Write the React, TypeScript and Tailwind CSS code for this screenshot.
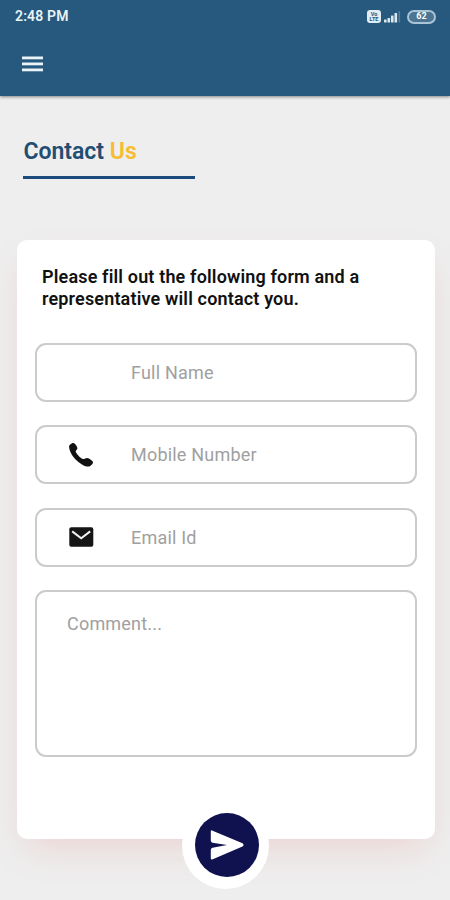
import type { ReactNode } from 'react';

interface FieldProps {
  type: string;
  placeholder: string;
  icon?: ReactNode;
}

function Field({ type, placeholder, icon }: FieldProps) {
  return (
    <label className="flex h-[59px] items-center rounded-[11px] border-2 border-[#cbcbcb] bg-white pl-[30px]">
      <span className="flex w-16 shrink-0 items-center">{icon}</span>
      <input
        type={type}
        placeholder={placeholder}
        className="min-w-0 flex-1 bg-transparent text-[18px] tracking-[0.2px] outline-none placeholder:text-[#a0a0a0]"
      />
    </label>
  );
}

function MenuIcon() {
  return (
    <svg width="21" height="16" viewBox="0 0 21 16" fill="#e9f3f8">
      <rect x="0" y="0.5" width="21" height="2.8" />
      <rect x="0" y="6.5" width="21" height="2.8" />
      <rect x="0" y="12.5" width="21" height="2.8" />
    </svg>
  );
}

function PhoneIcon() {
  return (
    <svg className="ml-[0.5px]" width="26" height="26" viewBox="0 0 26 26" fill="#111">
      <path d="M1.1 4.4 C1.1 2.8 4 .8 5.6 1 C7.3 1.7 9.4 4.8 9.4 6.2 C9.4 7.6 7.6 8.3 7.6 9.4 C8.4 11.8 12.4 16 14.8 17 C16.4 17.2 17.6 15.9 19.2 15.9 C21.2 16.2 24.6 18.6 25 20 C25.2 21.8 22.6 24.3 20.6 24.6 C17.6 24.9 12.8 22.4 9 18.8 C4.6 14.8 .9 8.4 1.1 4.4Z" />
    </svg>
  );
}

function MailIcon() {
  return (
    <svg className="ml-[1.5px]" width="25" height="20" viewBox="0 0 25 20">
      <rect x="0.3" y="0.3" width="24" height="19.4" rx="2" fill="#151515" />
      <path d="M3.2 4.4 L12.2 11.2 L21.2 4.4" fill="none" stroke="#f2f2f2" strokeWidth="2" />
    </svg>
  );
}

function StatusBar() {
  return (
    <div className="flex h-8 items-center justify-between pl-[15px] pr-[14px] pt-px">
      <span className="text-[14px] font-semibold tracking-[0.15px] text-[#e9f3f8]">2:48 PM</span>
      <div className="flex items-center">
        <span className="flex h-[13px] w-[14px] flex-col items-center justify-center rounded-[3px] bg-[#e3ecf2] text-[5.5px] font-bold leading-[5px] text-[#25587c]">
          <span>Vo</span>
          <span>LTE</span>
        </span>
        <svg className="ml-[3px]" width="17" height="13" viewBox="0 0 17 13" fill="#dce7ee">
          <rect x="0" y="9.5" width="2.6" height="3" rx="0.5" />
          <rect x="3.5" y="8" width="2.6" height="4.5" rx="0.5" />
          <rect x="7" y="5.5" width="2.6" height="7" rx="0.5" />
          <rect x="10.5" y="3" width="2.6" height="9.5" rx="0.5" />
          <rect x="14.5" y="1" width="1.6" height="11.5" rx="0.5" opacity="0.25" />
        </svg>
        <span className="ml-[6px] flex h-[14px] w-[29px] items-center justify-center rounded-full border-2 border-[#a9c4d5] bg-[#4b7592] text-[9px] font-bold leading-none">
          62
        </span>
      </div>
    </div>
  );
}

export default function App() {
  return (
    <div className="h-[900px] w-[450px] overflow-hidden bg-[#eeeeee] font-['Roboto',sans-serif]">
      <header className="relative h-24 bg-[#26597d] text-white shadow-[0_1px_3px_rgba(0,0,0,0.45)]">
        <StatusBar />
        <button className="ml-[22px] mt-[24px] block" aria-label="Menu">
          <MenuIcon />
        </button>
      </header>

      <h1 className="ml-[23.4px] mt-[40px] h-[42.5px] w-[172px] border-b-[3px] border-[#1b4a7c] text-[23px] font-semibold leading-8 text-[#214d73]">
        Contact <span className="text-[#f6bd33]">Us</span>
      </h1>

      {/* Form card */}
      <form className="relative ml-[17px] mt-[61.5px] flex h-[599px] w-[418px] flex-col gap-[23.5px] rounded-[10px] bg-white px-[18px] pt-[26px] shadow-[0_16px_36px_-10px_rgba(225,100,95,0.21)]">
        <p className="mb-[9px] ml-[7px] text-[18px] font-semibold leading-[22px] tracking-[0.16px] text-[#111]">
          Please fill out the following form and a
          <br />
          representative will contact you.
        </p>
        <Field type="text" placeholder="Full Name" />
        <Field type="tel" placeholder="Mobile Number" icon={<PhoneIcon />} />
        <Field type="email" placeholder="Email Id" icon={<MailIcon />} />
        <textarea
          placeholder="Comment..."
          className="h-[167px] resize-none rounded-[11px] border-2 border-[#cbcbcb] px-[30px] py-[18px] text-[18px] leading-7 tracking-[0.2px] outline-none placeholder:text-[#a0a0a0]"
        />

        {/* Send button hangs over the bottom edge of the card */}
        <div className="absolute -bottom-[49.5px] left-[165px] flex size-[87px] items-center justify-center rounded-full bg-white pl-[3px]">
          <button type="button" aria-label="Send" className="flex size-[64.5px] items-center justify-center rounded-full bg-[#10124f]">
            <svg width="34" height="30" viewBox="0 0 34 30" fill="#fff">
              <path d="M2 .4 L32.5 13.3 Q34.6 15 32.5 16.5 L2.2 29.5 Q.8 29.8 .8 28.2 V20 Q.8 18.2 2.6 17.8 L17 15 L2.6 12.8 Q.8 12.4 .8 10.6 V1.6 Q.8 0 2 .4Z" />
            </svg>
          </button>
        </div>
      </form>
    </div>
  );
}
